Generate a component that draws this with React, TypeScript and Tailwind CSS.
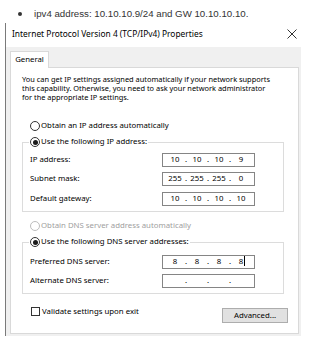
import React, { Fragment } from "react";

function Radio({ checked, disabled }: { checked?: boolean; disabled?: boolean }) {
  return (
    <span
      className={
        disabled
          ? "flex w-[10px] h-[10px] shrink-0 items-center justify-center rounded-full border border-[#bcbcbc] bg-white"
          : "flex w-[10px] h-[10px] shrink-0 items-center justify-center rounded-full border border-[#333333] bg-white"
      }
    >
      {checked && <span className="block w-[5px] h-[5px] rounded-full bg-[#1a1a1a]" />}
    </span>
  );
}

function IpField({ octets, cursor }: { octets: string[]; cursor?: boolean }) {
  return (
    <div className="flex h-[14px] w-[93px] items-center border border-[#858585] bg-white pl-[3px] text-[7.8px] leading-none text-black">
      {octets.map((o, i) => (
        <Fragment key={i}>
          {i > 0 && <span className="w-[4px] text-center">.</span>}
          <span className="relative w-[18px] text-center">
            {o}
            {cursor && i === 3 && (
              <span className="absolute left-[12px] top-[-2px] block h-[10px] w-[1px] bg-black" />
            )}
          </span>
        </Fragment>
      ))}
    </div>
  );
}

function FieldRow({ label, octets, cursor, className }: { label: string; octets: string[]; cursor?: boolean; className?: string }) {
  return (
    <div className={"flex h-[14px] items-center " + (className ?? "")}>
      <span className="w-[132px] whitespace-nowrap">{label}</span>
      <IpField octets={octets} cursor={cursor} />
    </div>
  );
}

export default function App() {
  return (
    <div className="relative h-[355px] w-[315px] overflow-hidden bg-white">
      <div className="flex h-[23px] items-start pt-[7px] font-['Liberation_Sans',Arial,sans-serif] text-[9.7px] leading-[14px] text-[#333333]">
        <span className="ml-[18px] mt-[5px] block h-[4px] w-[4px] rounded-full bg-[#333333]" />
        <span className="ml-[12px]">ipv4 address: 10.10.10.9/24 and GW 10.10.10.10.</span>
      </div>

      <div className="ml-[5px] w-[296px] border-l border-[#7a7a7a] font-['Noto_Sans',sans-serif] text-[7.8px] leading-none text-black">
        <div className="flex h-[24px] items-center justify-between pb-[2px] pl-[6px] pr-[4px]">
          <span className="whitespace-nowrap text-[8.4px] text-black">Internet Protocol Version 4 (TCP/IPv4) Properties</span>
          <svg width="10" height="10" viewBox="0 0 10 10">
            <path d="M0.5 0.5 L9.5 9.5 M9.5 0.5 L0.5 9.5" stroke="#333" strokeWidth="1" />
          </svg>
        </div>

        <div className="bg-[#f0f0f0] pb-[2px] pl-[4px] pt-[4px]">
          <div className="relative z-10 -mb-[1px] flex h-[17px] w-[39px] items-center justify-center border border-b-0 border-[#d9d9d9] bg-white">
            General
          </div>
          <div className="h-[267px] w-[289px] border border-[#d9d9d9] bg-white">
            <div className="whitespace-nowrap pl-[11px] pt-[7px] text-[7.4px] leading-[9px]">
              <div>You can get IP settings assigned automatically if your network supports</div>
              <div>this capability. Otherwise, you need to ask your network administrator</div>
              <div>for the appropriate IP settings.</div>
            </div>

            <div className="ml-[19px] mt-[19px] flex h-[10px] items-center gap-[1px] whitespace-nowrap">
              <Radio />
              <span>Obtain an IP address automatically</span>
            </div>

            <fieldset className="ml-[11px] mt-[6px] w-[262px] border border-[#dcdcdc] px-[7px] pb-[5px]">
              <legend className="-ml-[1px] px-[1px]">
                <span className="flex h-[10px] items-center gap-[1px] whitespace-nowrap">
                  <Radio checked />
                  <span>Use the following IP address:</span>
                </span>
              </legend>
              <FieldRow className="mt-[6px]" label="IP address:" octets={["10", "10", "10", "9"]} />
              <FieldRow className="mt-[5px]" label="Subnet mask:" octets={["255", "255", "255", "0"]} />
              <FieldRow className="mt-[6px]" label="Default gateway:" octets={["10", "10", "10", "10"]} />
            </fieldset>

            <div className="ml-[19px] mt-[9px] flex h-[10px] items-center gap-[1px] whitespace-nowrap text-[#a0a0a0]">
              <Radio disabled />
              <span>Obtain DNS server address automatically</span>
            </div>

            <fieldset className="ml-[11px] mt-[6px] w-[262px] border border-[#dcdcdc] px-[7px] pb-[5px]">
              <legend className="-ml-[1px] px-[1px]">
                <span className="flex h-[10px] items-center gap-[1px] whitespace-nowrap">
                  <Radio checked />
                  <span>Use the following DNS server addresses:</span>
                </span>
              </legend>
              <FieldRow className="mt-[8px]" label="Preferred DNS server:" octets={["8", "8", "8", "8"]} cursor />
              <FieldRow className="mt-[5px]" label="Alternate DNS server:" octets={["", "", "", ""]} />
            </fieldset>

            <div className="mt-[13px] flex items-start justify-between pl-[20px] pr-[10px]">
              <div className="flex h-[9px] items-center gap-[2px] whitespace-nowrap">
                <span className="block h-[9px] w-[9px] border border-[#333333] bg-white" />
                <span>Validate settings upon exit</span>
              </div>
              <div className="mt-[1px] flex h-[15px] w-[66px] items-center justify-center border border-[#adadad] bg-[#e1e1e1]">
                Advanced...
              </div>
            </div>
          </div>
        </div>
      </div>
    </div>
  );
}
